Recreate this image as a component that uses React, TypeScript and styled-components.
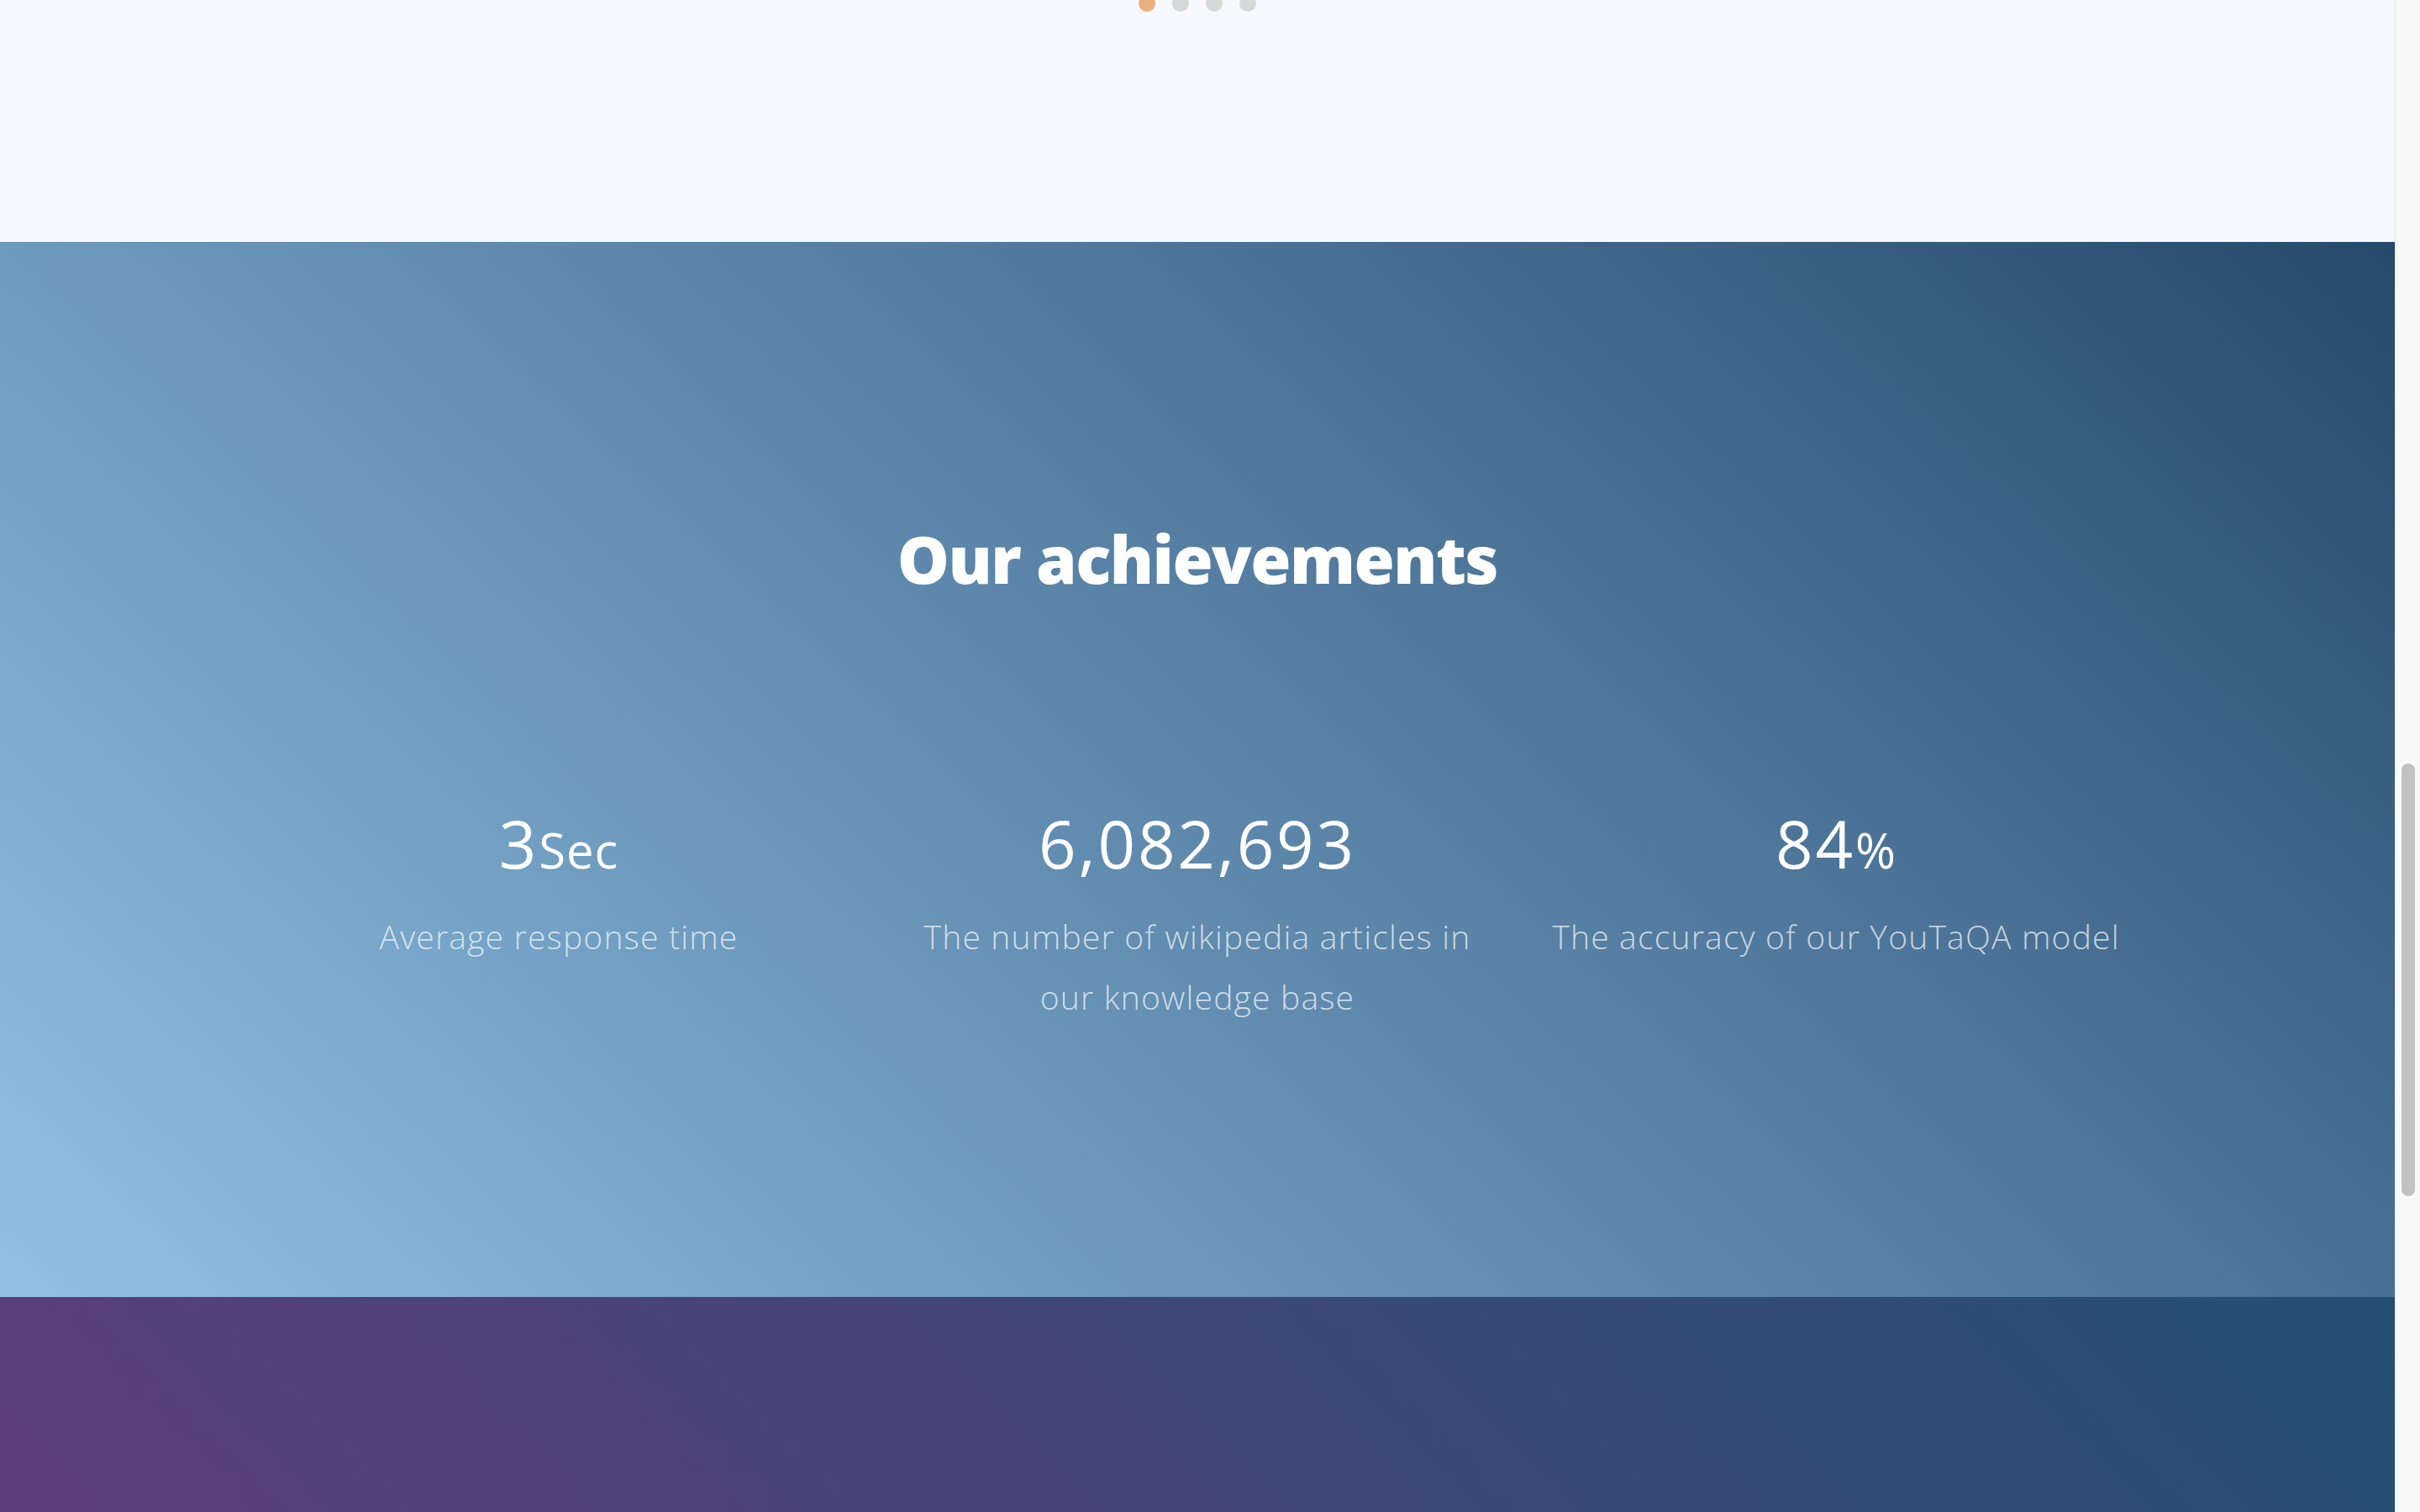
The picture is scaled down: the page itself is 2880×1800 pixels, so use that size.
import styled, { createGlobalStyle } from 'styled-components';

const GlobalStyle = createGlobalStyle`
  html,
  body {
    margin: 0;
    padding: 0;
    overflow: hidden;
    background-color: #f8f9fe;
    font-family: 'Open Sans', 'Liberation Sans', sans-serif;
  }
`;

const StyledPage = styled.div`
  display: flex;
  height: 100vh;
`;

const StyledMain = styled.main`
  flex: 1;
  display: flex;
  flex-direction: column;
  overflow: hidden;
`;

const StyledCarouselEnd = styled.section`
  flex: none;
  height: 288px;
  display: flex;
  justify-content: center;
  align-items: flex-start;
  background-color: #f8f9fe;
`;

const StyledDots = styled.div`
  display: flex;
  gap: 20px;
  margin-top: -6px;
`;

const StyledDot = styled.span<{ $active?: boolean }>`
  width: 20px;
  height: 20px;
  border-radius: 50%;
  background-color: ${({ $active }) => ($active ? '#e9b07e' : '#d8d8d8')};
`;

const StyledAchievements = styled.section`
  flex: none;
  box-sizing: border-box;
  height: 1256px;
  padding-top: 331px;
  background: linear-gradient(43deg, #90c1e5 0%, #6a97ba 35%, #4c7498 66%, #264a6a 100%);
  color: #fff;
`;

const StyledTitle = styled.h2`
  margin: 0;
  font-family: 'Open Sans', 'Liberation Sans', sans-serif;
  font-size: 78px;
  font-weight: 800;
  line-height: 1.2;
  letter-spacing: -1.5px;
  text-align: center;
`;

const StyledStats = styled.div`
  display: grid;
  grid-template-columns: repeat(3, 760px);
  justify-content: center;
  margin-top: 245px;
`;

const StyledStat = styled.div`
  padding: 0 35px;
  text-align: center;
`;

const StyledValue = styled.div`
  font-size: 78px;
  font-weight: 400;
  line-height: 1.2;
  letter-spacing: 2.8px;
`;

const StyledUnit = styled.span`
  font-size: 58px;
  letter-spacing: 1px;
`;

const StyledCaption = styled.p`
  margin: 28px 0 0;
  font-size: 39px;
  font-weight: 300;
  line-height: 72px;
  letter-spacing: 1.2px;
  color: rgba(255, 255, 255, 0.7);
`;

const StyledNextSection = styled.section`
  flex: 1;
  background: linear-gradient(45deg, #5d3c7d 0%, #3f4775 50%, #244f73 100%);
`;

const StyledScrollRail = styled.div`
  flex: none;
  box-sizing: border-box;
  width: 30px;
  padding: 909px 0 0 7px;
  background-color: #f9f9f9;
  border-left: 1px solid #ececec;
`;

const StyledScrollThumb = styled.div`
  width: 16px;
  height: 515px;
  border-radius: 8px;
  background-color: #c2c2c2;
`;

const stats = [
  { value: '3', unit: 'Sec', caption: 'Average response time' },
  { value: '6,082,693', unit: '', caption: 'The number of wikipedia articles in our knowledge base' },
  { value: '84', unit: '%', caption: 'The accuracy of our YouTaQA model' },
];

export default function App() {
  return (
    <>
      <GlobalStyle />
      <StyledPage>
        <StyledMain>
          <StyledCarouselEnd>
            <StyledDots>
              {[0, 1, 2, 3].map((index) => (
                <StyledDot key={index} $active={index === 0} />
              ))}
            </StyledDots>
          </StyledCarouselEnd>
          <StyledAchievements>
            <StyledTitle>Our achievements</StyledTitle>
            <StyledStats>
              {stats.map((stat) => (
                <StyledStat key={stat.caption}>
                  <StyledValue>
                    {stat.value}
                    {stat.unit && <StyledUnit>{stat.unit}</StyledUnit>}
                  </StyledValue>
                  <StyledCaption>{stat.caption}</StyledCaption>
                </StyledStat>
              ))}
            </StyledStats>
          </StyledAchievements>
          <StyledNextSection />
        </StyledMain>
        <StyledScrollRail>
          <StyledScrollThumb />
        </StyledScrollRail>
      </StyledPage>
    </>
  );
}
